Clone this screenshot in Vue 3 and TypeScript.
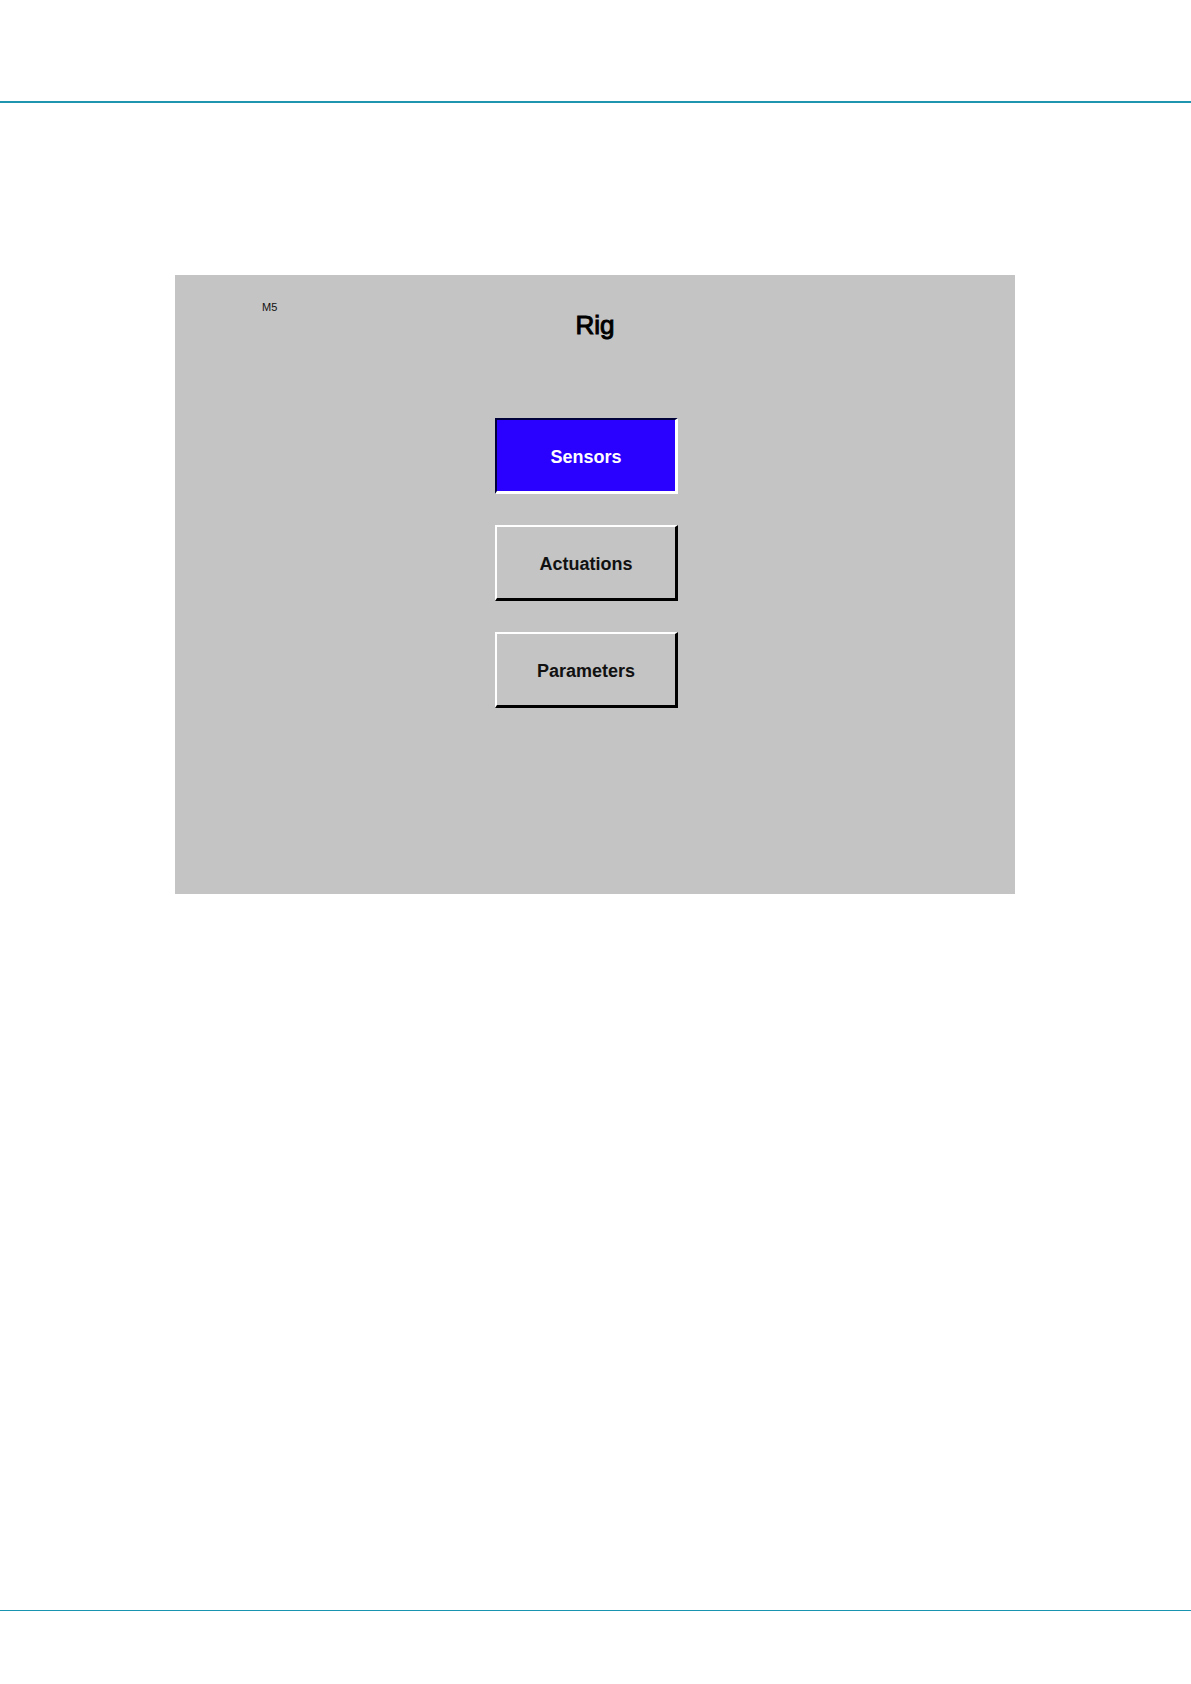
<script setup lang="ts">
import { ref } from 'vue'

const screenCode = 'M5'
const title = 'Rig'
const items: string[] = ['Sensors', 'Actuations', 'Parameters']
const selected = ref<string>('Sensors')
</script>

<template>
  <div class="page">
    <header class="page-header"></header>
    <main class="page-body">
      <section class="panel">
        <div class="panel-head">
          <span class="code">{{ screenCode }}</span>
          <h1 class="title">{{ title }}</h1>
        </div>
        <nav class="menu">
          <button
            v-for="item in items"
            :key="item"
            type="button"
            class="menu-button"
            :class="{ active: item === selected }"
            :aria-pressed="item === selected"
            @click="selected = item"
          >
            {{ item }}
          </button>
        </nav>
      </section>
    </main>
    <footer class="page-footer"></footer>
  </div>
</template>

<style>
body {
  margin: 0;
  background: #fff;
}
</style>

<style scoped>
.page {
  display: flex;
  flex-direction: column;
  box-sizing: border-box;
  min-height: 100vh;
  font-family: "Liberation Sans", Arial, sans-serif;
  color: #000;
}

.page-header {
  height: 101px;
  border-bottom: 2px solid #1f95b0;
}

.page-body {
  flex: 1;
  padding: 172px 176px 172px 175px;
}

.page-footer {
  height: 73px;
  border-top: 1px solid #1a93b0;
}

.panel {
  padding: 24px 0 186px;
  background: #c4c4c4;
}

.panel-head {
  display: grid;
  grid-template-columns: 1fr auto 1fr;
  align-items: start;
}

.code {
  padding-left: 87px;
  font-size: 11px;
  line-height: 16px;
  color: #111;
}

.title {
  margin: 12px 0 0;
  font-size: 26px;
  line-height: 28px;
  font-weight: 400;
  -webkit-text-stroke: 1px #000;
}

.menu {
  display: flex;
  flex-direction: column;
  align-items: center;
  gap: 31px;
  margin-top: 79px;
  padding-right: 17px;
}

.menu-button {
  box-sizing: border-box;
  width: 183px;
  height: 76px;
  padding: 2px 0 0;
  border-style: solid;
  border-width: 2px 3px 3px 2px;
  border-color: #fff #000 #000 #fff;
  background: #c4c4c4;
  color: #111;
  font-family: inherit;
  font-size: 18px;
  line-height: 20px;
  font-weight: 700;
}

.menu-button.active {
  border-color: #00003a #fff #fff #00003a;
  background: #2a00ff;
  color: #fff;
}
</style>
